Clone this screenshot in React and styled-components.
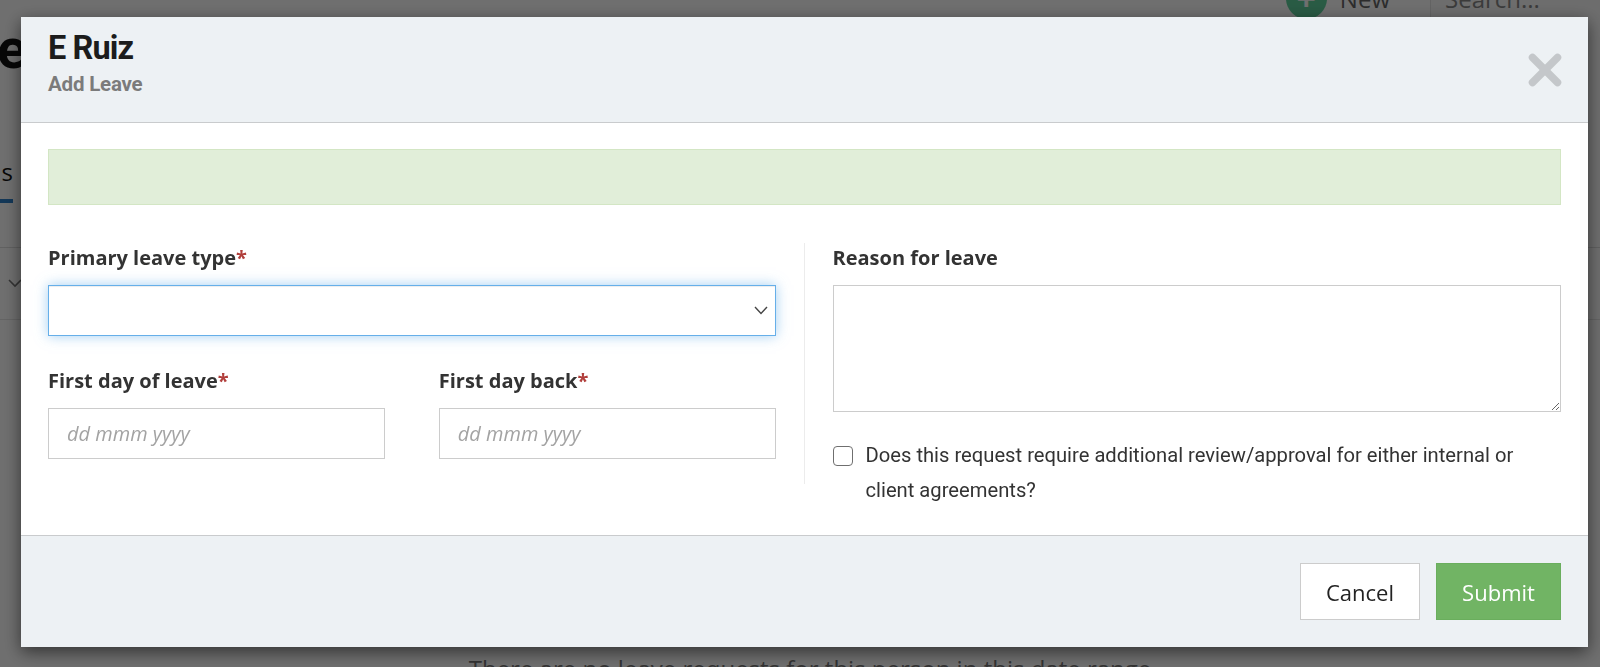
import React from "react";
import styled, { createGlobalStyle } from "styled-components";

const Global = createGlobalStyle`
  html, body { margin: 0; padding: 0; }
  body {
    width: 1600px;
    height: 667px;
    overflow: hidden;
    background: #ffffff;
    font-family: "Open Sans", "Liberation Sans", sans-serif;
    color: #333;
  }
  * { box-sizing: border-box; }
`;

/* ---------- background page ---------- */
const Page = styled.div`
  width: 1600px;
  height: 667px;
  overflow: hidden;
  display: flex;
  flex-direction: column;
`;

const TopBar = styled.div`
  height: 44px;
  margin-top: -24px;
  display: flex;
  justify-content: flex-end;
  align-items: center;
`;

const NewButton = styled.div`
  display: flex;
  align-items: center;
  gap: 13px;
  font-size: 24px;
  color: #666;
  margin-right: 40px;
`;

const PlusCircle = styled.span`
  width: 41px;
  height: 41px;
  border-radius: 50%;
  background: #5fd09d;
  color: #fff;
  display: flex;
  align-items: center;
  justify-content: center;
  font-size: 34px;
  font-weight: 700;
  line-height: 1;
`;

const SearchBox = styled.div`
  width: 170px;
  height: 44px;
  border-left: 1px solid #e4e4e4;
  background: #fafafa;
  padding-left: 14px;
  display: flex;
  align-items: center;
  font-size: 24px;
  color: #888;
`;

const PageTitle = styled.h1`
  margin: 1px 0 0 -3px;
  font-family: "Roboto", "Liberation Sans", sans-serif;
  font-weight: 700;
  font-size: 56px;
  line-height: 56px;
  color: #111;
`;

const Tabs = styled.div`
  margin-top: 78px;
  height: 93px;
  border-bottom: 1px solid #dedede;
  display: flex;
  align-items: flex-start;
`;

const Tab = styled.div`
  font-size: 24px;
  line-height: 34px;
  color: #111;
  margin-left: -4px;
  height: 48px;
  width: 17px;
  overflow: hidden;
  border-bottom: 4px solid #2d7fc8;
  text-align: right;
`;

const FilterRow = styled.div`
  height: 72px;
  display: flex;
  align-items: center;
  padding-left: 8px;
  border-bottom: 1px solid #e6e6e6;
`;

const EmptyMessage = styled.div`
  margin-top: auto;
  margin-bottom: -22px;
  text-align: center;
  padding-left: 20px;
  font-size: 24px;
  color: #777;
  line-height: 40px;
`;

/* ---------- modal ---------- */
const Overlay = styled.div`
  position: fixed;
  inset: 0;
  background: rgba(0, 0, 0, 0.565);
  padding: 17px 0 0 21px;
`;

const Modal = styled.div`
  width: 1567px;
  background: #fff;
  box-shadow: 0 5px 16px rgba(0, 0, 0, 0.55);
  display: flex;
  flex-direction: column;
`;

const Header = styled.div`
  background: #edf1f4;
  border-bottom: 1px solid #c9cbcd;
  padding: 14px 26px 27px 27px;
  display: flex;
  align-items: center;
  justify-content: space-between;
`;

const Titles = styled.div`
  display: flex;
  flex-direction: column;
`;

const grotesk = `"Roboto", "Liberation Sans", sans-serif`;

const Title = styled.div`
  font-family: ${grotesk};
  font-weight: 700;
  font-size: 32.5px;
  line-height: 34px;
  letter-spacing: -0.9px;
  color: #1c1c1c;
`;

const Subtitle = styled.div`
  margin-top: 9px;
  font-family: ${grotesk};
  font-weight: 700;
  font-size: 20.5px;
  line-height: 21px;
  letter-spacing: -0.2px;
  color: #7b7b7b;
`;

const CloseButton = styled.button`
  border: 0;
  background: none;
  padding: 0;
  width: 34px;
  height: 34px;
  margin-top: 13px;
  cursor: pointer;
  display: flex;
`;

const Body = styled.div`
  padding: 26px 27px 27px 27px;
`;

const Alert = styled.div`
  height: 56px;
  background: #e1eed9;
  border: 1px solid #d3e6c4;
`;

const Columns = styled.div`
  margin-top: 38px;
  display: grid;
  grid-template-columns: 1fr 1fr;
  align-items: start;
`;

const LeftColumn = styled.div`
  border-right: 1px solid #ececec;
  padding: 0 28px 25px 0;
  display: flex;
  flex-direction: column;
  gap: 30px;
`;

const RightColumn = styled.div`
  padding-left: 28px;
  display: flex;
  flex-direction: column;
`;

const Field = styled.div`
  display: flex;
  flex-direction: column;
  gap: 12px;
`;

const FieldRow = styled.div`
  display: grid;
  grid-template-columns: 1fr 1fr;
  gap: 54px;
`;

const Label = styled.label`
  font-family: "Open Sans", sans-serif;
  font-weight: 700;
  font-size: 20px;
  line-height: 30px;
  color: #333;
`;

const Required = styled.span`
  color: #b13f3c;
`;

const SelectWrap = styled.div`
  position: relative;
  height: 51px;
`;

const Select = styled.select`
  appearance: none;
  width: 100%;
  height: 100%;
  border: 1px solid #66afe9;
  border-radius: 0;
  background: #fff;
  outline: none;
  box-shadow: inset 0 1px 1px rgba(0, 0, 0, 0.075), 0 0 12px rgba(102, 175, 233, 0.6);
  font-family: "Open Sans", sans-serif;
  font-size: 20px;
`;

const Chevron = styled.svg`
  position: absolute;
  right: 8px;
  top: 21px;
  pointer-events: none;
`;

const TextInput = styled.input`
  height: 51px;
  width: 100%;
  border: 1px solid #cccccc;
  border-radius: 0;
  padding: 0 18px;
  font-family: "Open Sans", sans-serif;
  font-size: 20px;
  color: #333;
  outline: none;
  &::placeholder {
    font-style: italic;
    color: #a3a3a3;
  }
`;

const TextArea = styled.textarea`
  height: 127px;
  width: 100%;
  border: 1px solid #cccccc;
  border-radius: 0;
  resize: vertical;
  outline: none;
  font-family: "Open Sans", sans-serif;
  font-size: 18px;
  display: block;
`;

const CheckRow = styled.label`
  margin-top: 26px;
  display: flex;
  align-items: flex-start;
  gap: 13px;
  font-family: ${grotesk};
  font-size: 20.2px;
  line-height: 35px;
  color: #333;
`;

const CheckBox = styled.input`
  appearance: none;
  flex: none;
  width: 20px;
  height: 20px;
  margin: 8px 0 0 0;
  border: 1px solid #6f6f6f;
  border-radius: 4px;
  background: #fff;
`;

const Footer = styled.div`
  background: #edf1f4;
  border-top: 1px solid #c9cbcd;
  padding: 27px;
  display: flex;
  justify-content: flex-end;
  gap: 16px;
`;

const Button = styled.button`
  height: 57px;
  padding: 0;
  width: ${(p) => p.$width}px;
  font-family: "Open Sans", sans-serif;
  font-size: 22px;
  border-radius: 0;
  cursor: pointer;
  background: ${(p) => (p.$primary ? "#71b464" : "#ffffff")};
  color: ${(p) => (p.$primary ? "#ffffff" : "#222222")};
  border: 1px solid ${(p) => (p.$primary ? "#6aae5d" : "#cccccc")};
`;

export default function App() {
  return (
    <>
      <Global />
      <Page>
        <TopBar>
          <NewButton>
            <PlusCircle>+</PlusCircle>
            New
          </NewButton>
          <SearchBox>Search...</SearchBox>
        </TopBar>
        <PageTitle>e</PageTitle>
        <Tabs>
          <Tab>s</Tab>
        </Tabs>
        <FilterRow>
          <svg width="14" height="9" viewBox="0 0 14 9">
            <polyline points="1,1 7,7 13,1" fill="none" stroke="#777" strokeWidth="1.6" />
          </svg>
        </FilterRow>
        <EmptyMessage>There are no leave requests for this person in this date range</EmptyMessage>
      </Page>

      <Overlay>
        <Modal>
          <Header>
            <Titles>
              <Title>E Ruiz</Title>
              <Subtitle>Add Leave</Subtitle>
            </Titles>
            <CloseButton aria-label="Close">
              <svg width="34" height="34" viewBox="0 0 34 34">
                <g stroke="#c4c7ca" strokeWidth="7.5" strokeLinecap="round">
                  <line x1="4.5" y1="4.5" x2="29.5" y2="29.5" />
                  <line x1="29.5" y1="4.5" x2="4.5" y2="29.5" />
                </g>
              </svg>
            </CloseButton>
          </Header>
          <Body>
            <Alert />
            <Columns>
              <LeftColumn>
                <Field>
                  <Label>
                    Primary leave type<Required>*</Required>
                  </Label>
                  <SelectWrap>
                    <Select defaultValue="">
                      <option value=""></option>
                    </Select>
                    <Chevron width="14" height="9" viewBox="0 0 14 9">
                      <polyline points="1,1 7,7.5 13,1" fill="none" stroke="#444" strokeWidth="1.4" />
                    </Chevron>
                  </SelectWrap>
                </Field>
                <FieldRow>
                  <Field>
                    <Label>
                      First day of leave<Required>*</Required>
                    </Label>
                    <TextInput placeholder="dd mmm yyyy" />
                  </Field>
                  <Field>
                    <Label>
                      First day back<Required>*</Required>
                    </Label>
                    <TextInput placeholder="dd mmm yyyy" />
                  </Field>
                </FieldRow>
              </LeftColumn>
              <RightColumn>
                <Field>
                  <Label>Reason for leave</Label>
                  <TextArea />
                </Field>
                <CheckRow>
                  <CheckBox type="checkbox" />
                  <span>
                    Does this request require additional review/approval for either internal or
                    <br />
                    client agreements?
                  </span>
                </CheckRow>
              </RightColumn>
            </Columns>
          </Body>
          <Footer>
            <Button $width={120}>Cancel</Button>
            <Button $width={125} $primary>
              Submit
            </Button>
          </Footer>
        </Modal>
      </Overlay>
    </>
  );
}
